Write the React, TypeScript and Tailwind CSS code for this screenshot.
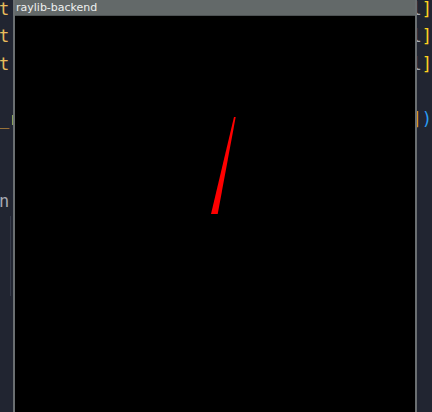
import React from 'react';

const leftLines: React.ReactNode[] = [
  <span className="text-[#e8bd5c]">t</span>,
  <span className="text-[#e8bd5c]">t</span>,
  <span className="text-[#e8bd5c]">t</span>,
  '',
  <span className="text-[#e8a840]">
    _<span className="text-[#e8bd5c]">r</span>
  </span>,
  '',
  '',
  <span className="text-[#a7abb4]">n'</span>,
];

const rightLines: React.ReactNode[] = [
  <><span className="text-[#a9adb5]">l</span><span className="text-[#ffd21f]">]</span></>,
  <><span className="text-[#a9adb5]">l</span><span className="text-[#ffd21f]">]</span></>,
  <><span className="text-[#a9adb5]">l</span><span className="text-[#ffd21f]">]</span></>,
  '',
  <><span className="text-[#d9a91c]">]</span><span className="text-[#2a9df4]">)</span></>,
];

function EditorColumn({ lines, align }: { lines: React.ReactNode[]; align: 'left' | 'right' }) {
  return (
    <div
      className={`h-full overflow-hidden bg-[#212531] font-['DejaVu_Sans_Mono',monospace] text-[17px] leading-[27.5px] ${
        align === 'right' ? 'w-[15px]' : 'w-[13px]'
      }`}
    >
      <div className={`-mt-[4.5px] flex flex-col ${align === 'right' ? 'items-end' : 'items-start -ml-[1px]'}`}>
        {lines.map((l, i) => (
          <div key={i} className="h-[27.5px] whitespace-pre">
            {l}
          </div>
        ))}
      </div>
      {/* indent guide */}
      {align === 'left' && <div className="ml-[10px] h-[80px] w-[1px] bg-[#363b4a]" />}
    </div>
  );
}

export default function App() {
  return (
    <div className="flex h-[412px] w-[432px] overflow-hidden bg-[#212531]">
      <EditorColumn lines={leftLines} align="left" />

      {/* raylib window */}
      <div className="flex h-full w-[404px] flex-col border-x-2 border-[#6a6f71]">
        <div className="flex h-[16px] shrink-0 items-center border-b border-[#4d5253] bg-[#636969] pl-[1px] font-['DejaVu_Sans',sans-serif] text-[11px] leading-none text-[#eef0f0]">
          raylib-backend
        </div>
        <div className="relative flex-1 bg-black">
          <svg className="absolute inset-0 h-full w-full" viewBox="0 0 400 396" preserveAspectRatio="none">
            <polygon points="219,101 220.7,101 202.7,198 196,198" fill="#ff0000" />
          </svg>
        </div>
      </div>

      <EditorColumn lines={rightLines} align="right" />
    </div>
  );
}
